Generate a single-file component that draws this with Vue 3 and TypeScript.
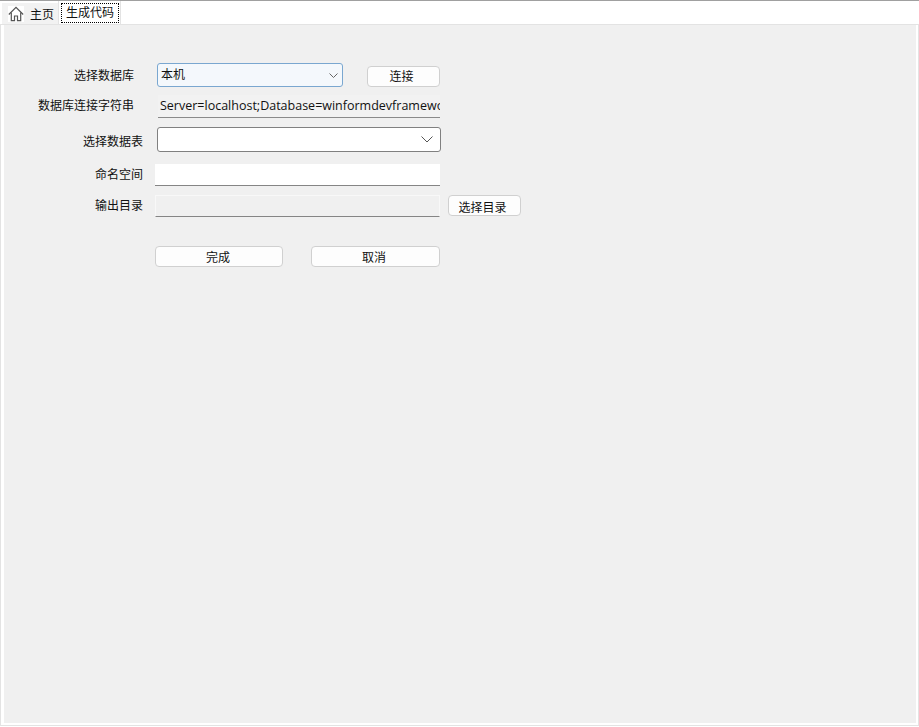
<script setup lang="ts">
const stringValue = 'Server=localhost;Database=winformdevframework'
</script>

<template>
  <div class="window">
    <div class="tabs">
      <div class="tab home">
        <svg class="home-icon" width="16" height="16" viewBox="0 0 16 16" fill="none" stroke="#555" stroke-width="1.2">
          <path d="M.8 8.5 8 1.3l7.2 7.2" />
          <path d="M3.3 6.5v8.2h3.2v-4.7h3v4.7h3.2V6.5" />
        </svg>
        <span>主页</span>
      </div>
      <div class="tab active"><span class="focus">生成代码</span></div>
    </div>
    <div class="body">
      <div class="panel">
        <div class="row row1">
          <label class="lbl short">选择数据库</label>
          <div class="combo blue">
            <span class="combo-text">本机</span>
            <svg width="9" height="5" viewBox="0 0 9 5" fill="none" stroke="#666"><path d="M.5.5 4.5 4.5 8.5.5" /></svg>
          </div>
          <button class="btn connect">连接</button>
        </div>
        <div class="row row2">
          <label class="lbl short">数据库连接字符串</label>
          <div class="conn"><span>{{ stringValue }}</span></div>
        </div>
        <div class="row row3">
          <label class="lbl">选择数据表</label>
          <div class="combo plain">
            <svg width="12" height="7" viewBox="0 0 12 7" fill="none" stroke="#555"><path d="M.5.5 6 6 11.5.5" /></svg>
          </div>
        </div>
        <div class="row row4">
          <label class="lbl">命名空间</label>
          <div class="field white"></div>
        </div>
        <div class="row row5">
          <label class="lbl">输出目录</label>
          <div class="field grey"></div>
          <button class="btn pick">选择目录</button>
        </div>
        <div class="row row6">
          <button class="btn action">完成</button>
          <button class="btn action">取消</button>
        </div>
      </div>
    </div>
  </div>
</template>

<style>
html, body { margin: 0; background: #fff; }
</style>

<style scoped>
.window {
  width: 919px;
  height: 727px;
  box-sizing: border-box;
  display: flex;
  flex-direction: column;
  border-top: 1px solid #a0a0a0;
  background: #fff;
  font: 12px "Noto Sans CJK SC", sans-serif;
  color: #111;
  overflow: hidden;
}
.tabs {
  height: 23px;
  flex: none;
  display: flex;
  align-items: flex-start;
  padding-left: 2px;
  border-bottom: 1px solid #e3e3e3;
}
.tab {
  display: flex;
  align-items: center;
  height: 23px;
  box-sizing: border-box;
}
.home {
  width: 56px;
  padding-left: 6px;
  gap: 6px;
  margin-top: 2px;
  height: 21px;
  background: #f2f2f2;
}
.home-icon { background: #fff; }
.active {
  width: 63px;
  padding: 1px 1px 1px 2px;
  border-left: 1px solid #e3e3e3;
  border-right: 1px solid #e3e3e3;
}
.focus {
  display: block;
  border: 1px dotted #000;
  line-height: 16px;
  padding-bottom: 2px;
  width: 100%;
  text-align: center;
  box-sizing: border-box;
}
.body {
  flex: 1;
  display: flex;
  margin-bottom: 1px;
  padding: 0 2px 2px 3px;
  border-left: 1px solid #e3e3e3;
  border-right: 1px solid #e3e3e3;
  border-bottom: 1px solid #e3e3e3;
}
.panel {
  flex: 1;
  background: #f0f0f0;
  padding-top: 38px;
}
.row {
  display: flex;
  align-items: center;
}
.lbl {
  width: 139px;
  text-align: right;
  flex: none;
  color: #111;
  margin-top: -4px;
}
.short { width: 130px; }
.row1 .lbl { margin-top: -2px; }
.row3 .lbl { margin-top: 2px; }
.combo {
  box-sizing: border-box;
  display: flex;
  align-items: center;
  justify-content: space-between;
  border-radius: 3px;
}
.combo-text { margin-top: -3px; }
.blue {
  width: 186px;
  height: 24px;
  margin-left: 23px;
  padding: 0 4px 0 3px;
  border: 1px solid #7aa7d0;
  background: #f4f8fc;
}
.plain {
  width: 284px;
  height: 25px;
  margin-left: 14px;
  padding: 0 7px 0 4px;
  justify-content: flex-end;
  border: 1px solid #808080;
  background: #fff;
}
.btn {
  box-sizing: border-box;
  font: inherit;
  color: #111;
  background: #fdfdfd;
  border: 1px solid #d0d0d0;
  border-radius: 4px;
  padding: 0 2px 0 0;
}
.row1 { height: 24px; }
.connect { width: 73px; height: 21px; margin: 3px 0 0 24px; padding: 0 4px 2px 0; }
.row2 { height: 23px; margin-top: 8px; }
.conn {
  margin-left: 24px;
  box-sizing: border-box;
  width: 282px;
  height: 23px;
  padding: 0 0 0 2px;
  background: #f2f2f2;
  border-bottom: 1px solid #8a8a8a;
  overflow: hidden;
  white-space: nowrap;
  font: 12.5px/21px "Open Sans", sans-serif;
}
.row3 { height: 25px; margin-top: 9px; }
.field {
  box-sizing: border-box;
  width: 285px;
  height: 22px;
  margin-left: 12px;
  border-bottom: 1px solid #858585;
}
.white { background: #fff; }
.grey { background: #f0f0f0; border-top: 1px solid #f8f8f8; border-left: 1px solid #f8f8f8; border-right: 1px solid #f8f8f8; }
.row4 { height: 22px; margin-top: 12px; }
.row5 { height: 22px; margin-top: 9px; }
.pick { width: 73px; height: 21px; margin: -1px 0 0 8px; padding: 2px 4px 0 0; }
.row6 { height: 21px; margin-top: 29px; padding-left: 151px; gap: 28px; }
.action { width: 128px; height: 21px; }
.action + .action { width: 129px; padding-right: 3px; }
</style>
